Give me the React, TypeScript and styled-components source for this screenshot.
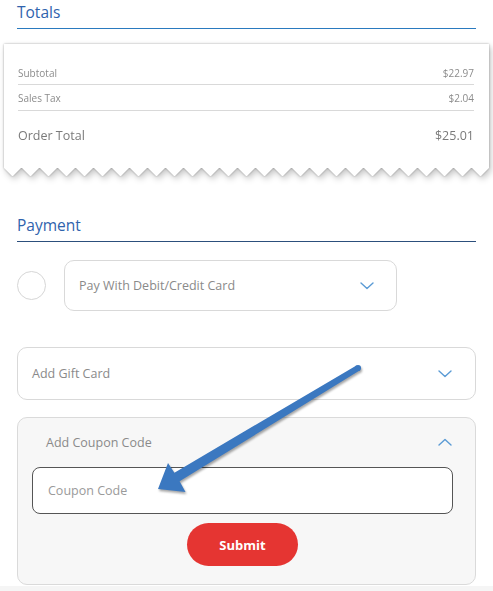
import styled, { createGlobalStyle } from "styled-components";

const GlobalStyle = createGlobalStyle`
  html, body {
    margin: 0;
    padding: 0;
    background: #ffffff;
  }
  body {
    font-family: "Open Sans", "Liberation Sans", sans-serif;
  }
`

const Page = styled.div`
  position: relative;
  width: 493px;
  height: 591px;
  overflow: hidden;
  box-sizing: border-box;
  padding: 0 17px;
  background: linear-gradient(#fff 0 586px, #f5f5f5 586px);
`

const SectionTitle = styled.h2<{ $line: string }>`
  margin: 0;
  padding: 2px 0 0;
  height: 26px;
  font-size: 15.5px;
  font-weight: 500;
  color: #2f63ad;
  border-bottom: 1px solid ${p => p.$line};
  line-height: 20px;
`

const ReceiptShadow = styled.div`
  margin: 15px -13px 0 -13px;
  filter: drop-shadow(0 0 1px rgba(0, 0, 0, 0.3)) drop-shadow(2px 3px 3px rgba(0, 0, 0, 0.22));
`

const Receipt = styled.div`
  --s: 18px;
  background: #fff;
  padding: 17px 15px 18px 14px;
  -webkit-mask: conic-gradient(from -45deg at bottom, #0000, #000 1deg 89deg, #0000 90deg) 50% / var(--s) 100%;
  mask: conic-gradient(from -45deg at bottom, #0000, #000 1deg 89deg, #0000 90deg) 50% / var(--s) 100%;
`

const ReceiptRow = styled.div<{ $h: number; $total?: boolean }>`
  box-sizing: border-box;
  display: flex;
  justify-content: space-between;
  align-items: center;
  height: ${p => p.$h}px;
  font-size: ${p => p.$total ? '12.5px' : '10px'};
  color: ${p => p.$total ? '#7a7a7a' : '#8c8c8c'};
  border-bottom: ${p => p.$total ? 'none' : '1px solid #d9d9d9'};
`

const PaymentTitle = styled(SectionTitle)`
  margin-top: 36px;
`

const PayRow = styled.div`
  display: flex;
  align-items: center;
  gap: 18px;
  margin-top: 18px;
`

const Radio = styled.span`
  width: 27px;
  height: 27px;
  border-radius: 50%;
  border: 1px solid #d6d6d6;
  flex-shrink: 0;
`

const SelectBox = styled.div<{ $width?: string }>`
  box-sizing: border-box;
  width: ${p => p.$width ?? '100%'};
  height: ${p => p.$width ? '51px' : '53px'};
  border: 1px solid #d9d9d9;
  border-radius: 10px;
  background: #fff;
  display: flex;
  align-items: center;
  justify-content: space-between;
  padding: 0 22px 0 14px;
  font-size: 12.5px;
  color: #8a8a8a;
`

const GiftBox = styled(SelectBox)`
  margin-top: 36px;
  padding-right: 23px;
`

const CouponPanel = styled.div`
  box-sizing: border-box;
  margin-top: 17px;
  height: 168px;
  border: 1px solid #dadada;
  border-radius: 10px;
  background: #f7f7f7;
  padding: 0 22px 0 14px;
  display: flex;
  flex-direction: column;
`

const CouponHeader = styled.div`
  display: flex;
  align-items: center;
  justify-content: space-between;
  height: 48px;
  padding: 0 1px 0 14px;
  font-size: 12.5px;
  color: #8a8a8a;
`

const CouponInput = styled.input`
  box-sizing: border-box;
  width: 100%;
  height: 47px;
  margin-top: 1px;
  border: 1px solid #555;
  border-radius: 8px;
  background: #fff;
  padding: 0 15px;
  font-family: inherit;
  font-size: 12.5px;
  outline: none;
  &::placeholder {
    color: #9a9a9a;
  }
`

const SubmitButton = styled.button`
  align-self: center;
  margin-top: 9px;
  width: 111px;
  height: 43px;
  border: none;
  border-radius: 22px;
  background: #e53532;
  color: #fff;
  font-family: inherit;
  font-weight: 700;
  font-size: 13px;
`

const Overlay = styled.svg`
  position: absolute;
  left: 0;
  top: 0;
  pointer-events: none;
  filter: drop-shadow(1px 2px 1px rgba(0, 0, 0, 0.35));
`

function Chevron({ up }: { up?: boolean }) {
  return (
    <svg width="14" height="8" viewBox="0 0 14 8">
      <polyline
        points={up ? "1,7 7,1.5 13,7" : "1,1 7,6.5 13,1"}
        fill="none"
        stroke="#5b9bd5"
        strokeWidth="1.4"
        strokeLinecap="round"
        strokeLinejoin="round"
      />
    </svg>
  )
}

export default function App() {
  return (
    <Page>
      <GlobalStyle />
      <SectionTitle $line="#2a7abf">Totals</SectionTitle>

      <ReceiptShadow>
        <Receipt>
          <ReceiptRow $h={24}>
            <span>Subtotal</span>
            <span>$22.97</span>
          </ReceiptRow>
          <ReceiptRow $h={26}>
            <span>Sales Tax</span>
            <span>$2.04</span>
          </ReceiptRow>
          <ReceiptRow $h={48} $total>
            <span>Order Total</span>
            <span>$25.01</span>
          </ReceiptRow>
        </Receipt>
      </ReceiptShadow>

      <PaymentTitle $line="#2c4f7c">Payment</PaymentTitle>

      <PayRow>
        <Radio />
        <SelectBox $width="333px">
          <span>Pay With Debit/Credit Card</span>
          <Chevron />
        </SelectBox>
      </PayRow>

      <GiftBox>
        <span>Add Gift Card</span>
        <Chevron />
      </GiftBox>

      <CouponPanel>
        <CouponHeader>
          <span>Add Coupon Code</span>
          <Chevron up />
        </CouponHeader>
        <CouponInput placeholder="Coupon Code" />
        <SubmitButton type="button">Submit</SubmitButton>
      </CouponPanel>

      <Overlay width="493" height="591" viewBox="0 0 493 591">
        <polygon
          points="356.4,365.4 174.4,472.7 168,463 158,489 185.5,492 179.6,481.3 359.6,370.6"
          fill="#3b78c0"
          strokeLinejoin="round"
        />
        <circle cx="358" cy="368" r="3.1" fill="#3b78c0" />
      </Overlay>
    </Page>
  )
}
